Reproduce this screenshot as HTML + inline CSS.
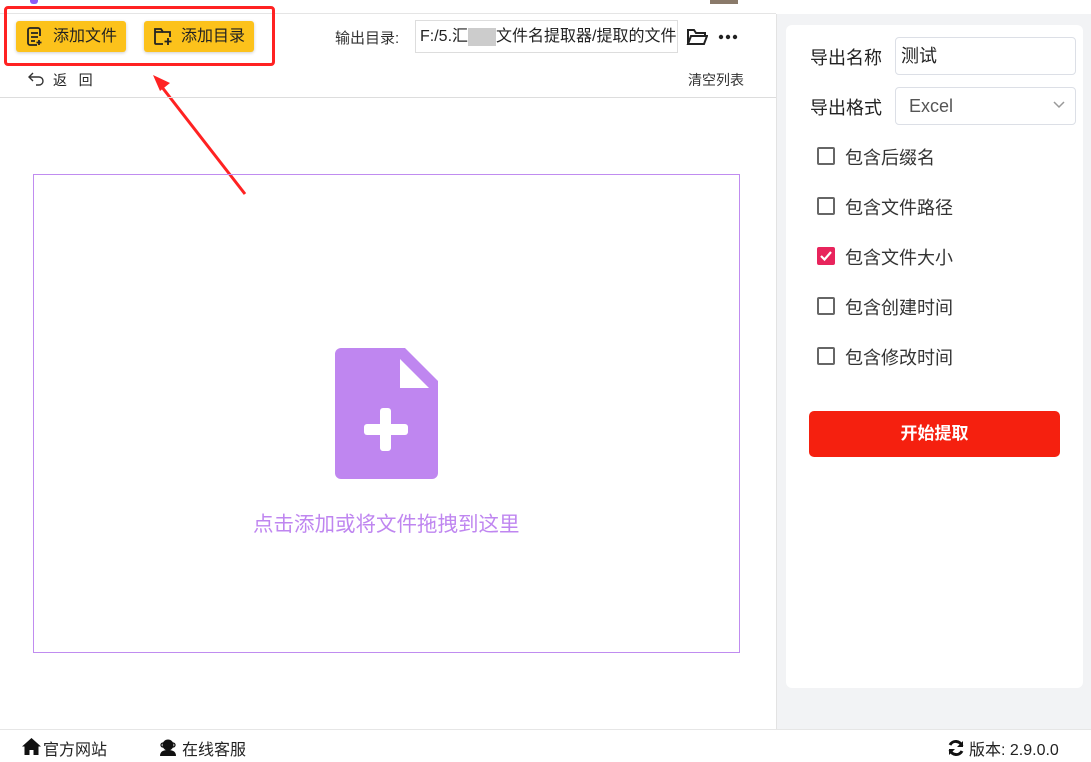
<!DOCTYPE html>
<html><head><meta charset="utf-8"><style>
*{margin:0;padding:0;box-sizing:border-box}
body{width:1091px;height:762px;overflow:hidden;background:#fff;font-family:"Liberation Sans","Noto Sans CJK SC",sans-serif;position:relative;color:#222}
.a{position:absolute}
.btn{position:absolute;top:21px;height:31px;background:#fcc21b;border-radius:3px;box-shadow:0 1px 3px rgba(0,0,0,.2);font-size:16px;line-height:31px;color:#222}
.cb{position:absolute;left:817px;width:18px;height:18px;border:2px solid #666;border-radius:2px}
.lbl{position:absolute;left:845px;font-size:18px;color:#333}
</style></head><body>
<div class="a" style="left:30px;top:0;width:8px;height:4px;background:#8b5cf6;border-radius:0 0 3px 3px"></div>
<div class="a" style="left:710px;top:0;width:28px;height:4px;background:#8a7a6a"></div>
<div class="a" style="left:0;top:13px;width:776px;height:1px;background:#e5e5e5"></div>
<div class="btn" style="left:16px;width:110px"><svg class="a" style="left:10px;top:6px" width="18" height="19" viewBox="0 0 18 19" fill="none" stroke="#222" stroke-width="1.8"><path d="M14 9V3a2 2 0 0 0-2-2H4a2 2 0 0 0-2 2v13a2 2 0 0 0 2 2h7"/><path d="M5 6h7M5 10h7M5 14h4M13 13v5M10.5 15.5h5"/></svg><span class="a" style="left:37px">添加文件</span></div>
<div class="btn" style="left:144px;width:110px"><svg class="a" style="left:9px;top:6px" width="20" height="19" viewBox="0 0 20 19" fill="none" stroke="#222" stroke-width="1.8"><path d="M10 17H3a1 1 0 0 1-1-1V2h6l2 3h7v5"/><path d="M2 5h8M15 11v7M11.5 14.5h7"/></svg><span class="a" style="left:37px">添加目录</span></div>
<div class="a" style="left:4px;top:6px;width:271px;height:60px;border:3px solid #f22;border-radius:4px"></div>
<svg class="a" style="left:150px;top:70px" width="100" height="128"><line x1="95" y1="124" x2="8" y2="12" stroke="#f22" stroke-width="3"/><path d="M3 5 L20 13 L10 21 Z" fill="#f22"/></svg>
<svg class="a" style="left:28px;top:71px" width="17" height="16" viewBox="0 0 17 16" fill="none" stroke="#333" stroke-width="1.4"><path d="M5 2 1 6l4 4"/><path d="M1 6h10a4 4 0 0 1 0 8H8"/></svg>
<div class="a" style="left:53px;top:70px;font-size:14px">返 &nbsp;&nbsp;回</div>
<div class="a" style="left:335px;top:27px;font-size:15px;color:#333">输出目录:</div>
<div class="a" style="left:415px;top:20px;width:263px;height:33px;border:1px solid #ddd;font-size:16px;line-height:32px;padding-left:4px;color:#222;white-space:nowrap;overflow:hidden">F:/5.汇<span style="display:inline-block;width:28px;height:18px;background:#ccc;vertical-align:middle"></span>文件名提取器/提取的文件</div>
<svg class="a" style="left:686px;top:28px" width="22" height="18" viewBox="0 0 22 18" fill="none" stroke="#222" stroke-width="2"><path d="M2 16V2h6l2 3h9v3"/><path d="M2 16l3-8h16l-3 8z"/></svg>
<svg class="a" style="left:718px;top:34px" width="20" height="6"><circle cx="3" cy="3" r="2.2" fill="#222"/><circle cx="10" cy="3" r="2.2" fill="#222"/><circle cx="17" cy="3" r="2.2" fill="#222"/></svg>
<div class="a" style="left:688px;top:70px;font-size:14px;color:#333">清空列表</div>
<div class="a" style="left:0;top:97px;width:776px;height:1px;background:#ddd"></div>
<div class="a" style="left:33px;top:174px;width:707px;height:479px;border:1px solid #c08cf0"></div>
<svg class="a" style="left:335px;top:348px" width="103" height="131" viewBox="0 0 103 131"><path d="M6 0h64l33 33v92a6 6 0 0 1-6 6H6a6 6 0 0 1-6-6V6a6 6 0 0 1 6-6z" fill="#bf86f0"/><path d="M65 11v29h29z" fill="#fff"/><rect x="29" y="76" width="44" height="11" rx="3" fill="#fff"/><rect x="45" y="60" width="11" height="43" rx="3" fill="#fff"/></svg>
<div class="a" style="left:253px;top:507px;font-size:20.5px;color:#bf86f0">点击添加或将文件拖拽到这里</div>
<div class="a" style="left:776px;top:14px;width:315px;height:715px;background:#f2f3f5;border-left:1px solid #e3e3e3"></div>
<div class="a" style="left:786px;top:25px;width:297px;height:663px;background:#fff;border-radius:6px"></div>
<div class="a" style="left:810px;top:44px;font-size:18px">导出名称</div>
<div class="a" style="left:895px;top:37px;width:181px;height:38px;border:1px solid #dcdfe6;border-radius:4px;font-size:18px;line-height:37px;padding-left:5px">测试</div>
<div class="a" style="left:810px;top:94px;font-size:18px">导出格式</div>
<div class="a" style="left:895px;top:87px;width:181px;height:38px;border:1px solid #dcdfe6;border-radius:4px;font-size:18px;line-height:37px;padding-left:13px;color:#555">Excel</div>
<svg class="a" style="left:1053px;top:101px" width="12" height="8"><path d="M1 1l5 5 5-5" fill="none" stroke="#999" stroke-width="1.5"/></svg>
<div class="cb" style="top:147px"></div><div class="lbl" style="top:144px">包含后缀名</div>
<div class="cb" style="top:197px"></div><div class="lbl" style="top:194px">包含文件路径</div>
<div class="cb" style="top:247px;background:#e8245c;border-color:#e8245c"><svg width="14" height="14" style="position:absolute;left:0;top:0"><path d="M2 7l3.5 3.5L12 3" fill="none" stroke="#fff" stroke-width="2.2"/></svg></div><div class="lbl" style="top:244px">包含文件大小</div>
<div class="cb" style="top:297px"></div><div class="lbl" style="top:294px">包含创建时间</div>
<div class="cb" style="top:347px"></div><div class="lbl" style="top:344px">包含修改时间</div>
<div class="a" style="left:809px;top:411px;width:251px;height:46px;background:#f5200f;border-radius:5px;color:#fff;font-size:17px;font-weight:bold;text-align:center;line-height:46px">开始提取</div>
<div class="a" style="left:0;top:729px;width:1091px;height:1px;background:#e6e6e6"></div>
<svg class="a" style="left:22px;top:738px" width="19" height="17" viewBox="0 0 19 17"><path d="M9.5 0L0 8.5h2.5V17h5v-5h4v5h5V8.5H19z" fill="#111"/></svg>
<div class="a" style="left:43px;top:736px;font-size:16px">官方网站</div>
<svg class="a" style="left:159px;top:738px" width="18" height="18" viewBox="0 0 18 18"><circle cx="9" cy="7" r="5.5" fill="#111"/><path d="M1 18c0-5 4-6 8-6s8 1 8 6z" fill="#111"/><rect x="2" y="5" width="14" height="4" rx="2" fill="none" stroke="#111" stroke-width="1.3"/></svg>
<div class="a" style="left:182px;top:736px;font-size:16px">在线客服</div>
<svg class="a" style="left:947px;top:739px" width="18" height="18" viewBox="0 0 18 18" fill="none" stroke="#111" stroke-width="3"><path d="M15 7A6.5 6.5 0 0 0 3 6"/><path d="M3 11a6.5 6.5 0 0 0 12 1"/><path d="M16 2v6h-6z M2 16v-6h6z" fill="#111" stroke="none"/></svg>
<div class="a" style="left:969px;top:736px;font-size:16px">版本: 2.9.0.0</div>
</body></html>
